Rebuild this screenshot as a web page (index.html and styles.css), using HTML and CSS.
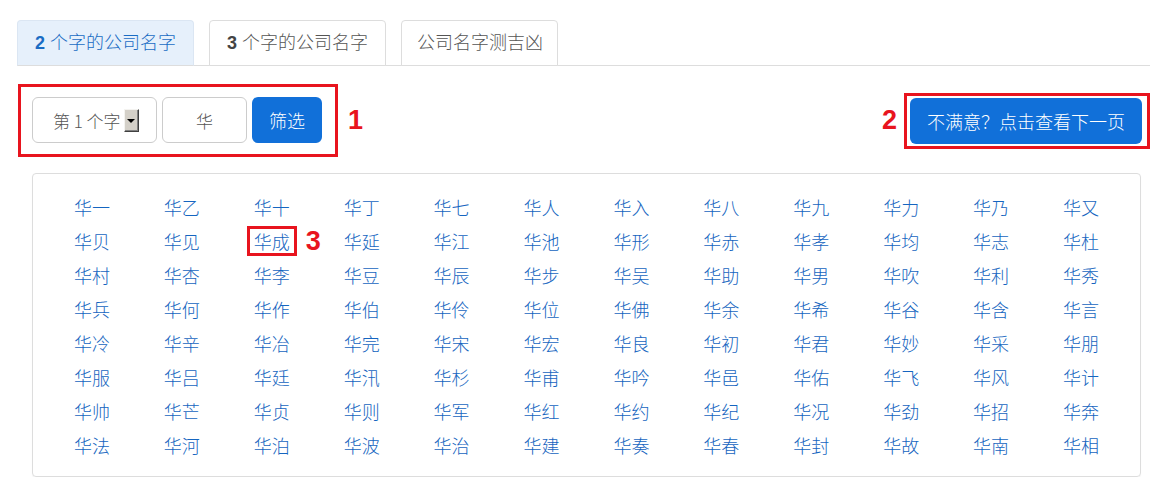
FILE: index.html
```html
<!DOCTYPE html>
<html lang="zh-CN">
<head>
<meta charset="utf-8">
<title>公司名字</title>
<link rel="stylesheet" href="styles.css">
</head>
<body>
<div class="page">
  <ul class="tabs">
    <li class="tab active"><b class="tab-num">2</b> 个字的公司名字</li>
    <li class="tab"><b class="tab-num">3</b> 个字的公司名字</li>
    <li class="tab tab-plain">公司名字测吉凶</li>
  </ul>

  <div class="toolbar">
    <div class="mark mark-filter">
      <div class="select"><span class="select-text">第 1 个字</span><span class="select-arrow"><span class="tri"></span></span></div>
      <div class="input">华</div>
      <button class="btn btn-filter">筛选</button>
    </div>
    <span class="num num-1">1</span>
    <span class="spacer"></span>
    <span class="num num-2">2</span>
    <div class="mark mark-next">
      <button class="btn btn-next">不满意？点击查看下一页</button>
    </div>
  </div>

  <div class="panel">
    <div class="grid">
      <a class="cell">华一</a><a class="cell">华乙</a><a class="cell">华十</a><a class="cell">华丁</a><a class="cell">华七</a><a class="cell">华人</a><a class="cell">华入</a><a class="cell">华八</a><a class="cell">华九</a><a class="cell">华力</a><a class="cell">华乃</a><a class="cell">华又</a>
      <a class="cell">华贝</a><a class="cell">华见</a><a class="cell cell-marked"><span class="hl">华成</span><span class="num num-3">3</span></a><a class="cell">华延</a><a class="cell">华江</a><a class="cell">华池</a><a class="cell">华形</a><a class="cell">华赤</a><a class="cell">华孝</a><a class="cell">华均</a><a class="cell">华志</a><a class="cell">华杜</a>
      <a class="cell">华村</a><a class="cell">华杏</a><a class="cell">华李</a><a class="cell">华豆</a><a class="cell">华辰</a><a class="cell">华步</a><a class="cell">华吴</a><a class="cell">华助</a><a class="cell">华男</a><a class="cell">华吹</a><a class="cell">华利</a><a class="cell">华秀</a>
      <a class="cell">华兵</a><a class="cell">华何</a><a class="cell">华作</a><a class="cell">华伯</a><a class="cell">华伶</a><a class="cell">华位</a><a class="cell">华佛</a><a class="cell">华余</a><a class="cell">华希</a><a class="cell">华谷</a><a class="cell">华含</a><a class="cell">华言</a>
      <a class="cell">华冷</a><a class="cell">华辛</a><a class="cell">华冶</a><a class="cell">华完</a><a class="cell">华宋</a><a class="cell">华宏</a><a class="cell">华良</a><a class="cell">华初</a><a class="cell">华君</a><a class="cell">华妙</a><a class="cell">华采</a><a class="cell">华朋</a>
      <a class="cell">华服</a><a class="cell">华吕</a><a class="cell">华廷</a><a class="cell">华汛</a><a class="cell">华杉</a><a class="cell">华甫</a><a class="cell">华吟</a><a class="cell">华邑</a><a class="cell">华佑</a><a class="cell">华飞</a><a class="cell">华风</a><a class="cell">华计</a>
      <a class="cell">华帅</a><a class="cell">华芒</a><a class="cell">华贞</a><a class="cell">华则</a><a class="cell">华军</a><a class="cell">华红</a><a class="cell">华约</a><a class="cell">华纪</a><a class="cell">华况</a><a class="cell">华劲</a><a class="cell">华招</a><a class="cell">华奔</a>
      <a class="cell">华法</a><a class="cell">华河</a><a class="cell">华泊</a><a class="cell">华波</a><a class="cell">华治</a><a class="cell">华建</a><a class="cell">华奏</a><a class="cell">华春</a><a class="cell">华封</a><a class="cell">华故</a><a class="cell">华南</a><a class="cell">华相</a>
    </div>
  </div>
</div>
</body>
</html>
```

FILE: styles.css
```css
* { box-sizing: border-box; }

html, body {
  margin: 0;
  padding: 0;
  background: #ffffff;
}

body {
  font-family: "Liberation Sans", "Noto Sans CJK SC", sans-serif;
  font-size: 18px;
  font-weight: 300;
  color: #555555;
}

.page {
  padding: 20px 2px 0 17px;
}

/* Tabs */
.tabs {
  list-style: none;
  margin: 0;
  padding: 0;
  display: flex;
  gap: 15px;
  border-bottom: 1px solid #dddddd;
}

.tab {
  height: 46px;
  margin-bottom: -1px;
  padding: 0 17px;
  display: flex;
  align-items: center;
  font-size: 18px;
  line-height: 1;
  color: #555555;
  border: 1px solid #dddddd;
  border-radius: 4px 4px 0 0;
  background: #ffffff;
}

.tab-plain {
  padding: 0 14px 0 15px;
}

.tab-num {
  font-weight: bold;
  color: #444444;
  margin-right: 5px;
}

.tab.active {
  background: #e6f0fb;
  color: #1a6cc4;
  border-color: #dbe6f3;
  border-bottom-color: #dddddd;
}

.tab.active .tab-num {
  color: #1a6cc4;
}

/* Toolbar */
.toolbar {
  display: flex;
  align-items: center;
  margin-top: 18px;
  padding-left: 1px;
}

.spacer { flex: 1; }

.mark {
  border: 3px solid #e8141e;
  display: flex;
  align-items: center;
}

.mark-filter {
  padding: 10px 13px 11px 11px;
  gap: 5px;
}

.mark-next {
  padding: 2px 5px 2px 3px;
}

.num {
  font-family: "Liberation Sans", sans-serif;
  font-weight: bold;
  font-size: 27px;
  line-height: 1;
  color: #e8141e;
}

.num-1 { margin-left: 10px; }
.num-2 { margin-right: 7px; }

.select {
  width: 125px;
  height: 46px;
  border: 1px solid #cccccc;
  border-radius: 6px;
  display: flex;
  align-items: center;
  padding-left: 20px;
  background: #ffffff;
}

.select-text {
  font-family: "Noto Sans CJK SC", sans-serif;
  font-size: 17px;
  line-height: 1;
  color: #555555;
}

.select-arrow {
  width: 15px;
  height: 23px;
  margin-left: 3px;
  background: #d4d0c8;
  border-top: 1px solid #f4f3f0;
  border-left: 1px solid #f4f3f0;
  border-right: 1px solid #404040;
  border-bottom: 1px solid #404040;
  box-shadow: inset -1px -1px 0 #808080;
  display: flex;
  align-items: center;
  justify-content: center;
}

.tri {
  width: 0;
  height: 0;
  border-left: 4px solid transparent;
  border-right: 4px solid transparent;
  border-top: 4px solid #000000;
  margin-top: 2px;
}

.input {
  width: 85px;
  height: 46px;
  border: 1px solid #cccccc;
  border-radius: 6px;
  display: flex;
  align-items: center;
  justify-content: center;
  font-family: "Noto Sans CJK SC", sans-serif;
  font-size: 17px;
  line-height: 1;
  color: #555555;
}

.btn {
  height: 46px;
  border: 0;
  border-radius: 6px;
  background: #1170d9;
  color: #ffffff;
  font-family: "Noto Sans CJK SC", sans-serif;
  font-size: 18px;
  font-weight: 300;
  line-height: 1;
  padding: 0;
  cursor: pointer;
}

.btn-filter { width: 70px; }
.btn-next { width: 232px; }

/* Panel */
.panel {
  margin: 16px 9px 0 15px;
  border: 1px solid #dddddd;
  border-radius: 4px;
  box-shadow: 0 1px 1px rgba(0, 0, 0, 0.05);
  padding: 16px 14px 14px 14px;
}

.grid {
  display: grid;
  grid-template-columns: repeat(12, 1fr);
  grid-auto-rows: 34px;
}

.cell {
  position: relative;
  display: flex;
  align-items: center;
  justify-content: center;
  font-family: "Noto Sans CJK SC", sans-serif;
  font-size: 18px;
  font-weight: 300;
  line-height: 1;
  color: #1565c0;
  text-decoration: none;
}

.hl {
  display: inline-block;
  border: 3px solid #e8141e;
  padding: 3px 4px;
  line-height: 18px;
}

.num-3 {
  position: absolute;
  left: calc(50% + 34px);
  top: 50%;
  transform: translateY(-50%);
}
```
